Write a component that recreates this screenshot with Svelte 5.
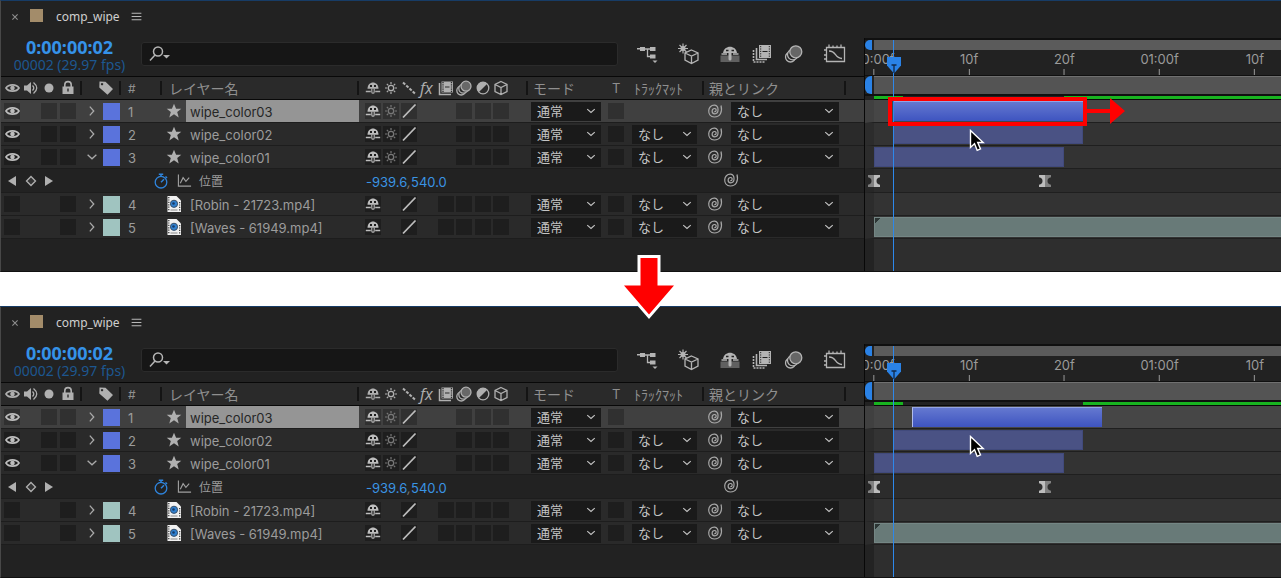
<script>
  // frames visible in the timeline
  const span = 42.75;
  const pct = (frame) => (frame / span) * 100;

  const ticks = [
    { frame: 0, text: '00:00f' },
    { frame: 10, text: '10f' },
    { frame: 20, text: '20f' },
    { frame: 30, text: '01:00f' },
    { frame: 40, text: '10f' },
  ];

  const layers = (start) => [
    { id: 1, name: 'wipe_color03', shape: true, selected: true, bar: [start, start + 20] },
    { id: 2, name: 'wipe_color02', shape: true, matte: true, bar: [2, 22] },
    { id: 3, name: 'wipe_color01', shape: true, matte: true, open: true, bar: [0, 20] },
    { id: 4, name: '[Robin - 21723.mp4]', matte: true },
    { id: 5, name: '[Waves - 61949.mp4]', matte: true, bar: [0, 43] },
  ];

  const comps = [
    { id: 'before', layers: layers(2), cached: [[0, 3], [20, 43]], callout: true },
    { id: 'after', layers: layers(4), cached: [[0, 3], [22, 43]], callout: false },
  ];

  const keyframes = [0, 18];
  const playhead = 2;
</script>

{#snippet icon(name, size = 16)}
  <svg class="icon" width={size} height={size} viewBox="0 0 16 16" fill="none" stroke="currentColor" stroke-width="1.3" aria-hidden="true">
    {#if name === 'eye'}
      <path d="M2 8C4.500 3.800 12.500 3.800 15 8 12.500 12.200 4.500 12.200 2 8Z" stroke-width="1.700" />
      <circle cx="8.500" cy="8" r="2.300" fill="currentColor" stroke="none" />
    {:else if name === 'speaker'}
      <path d="M1 5.500h3L8 2v12l-4-3.500H1z" fill="currentColor" stroke="none" />
      <path d="M9.500 5.500q2.500 2.500 0 5M10.500 2.500q6.500 5.500 0 11" />
    {:else if name === 'dot'}
      <circle cx="8" cy="8" r="4.500" fill="currentColor" stroke="none" />
    {:else if name === 'lock'}
      <path d="M4.800 7V4.800a3.200 3.200 0 0 1 6.400 0V7" stroke-width="1.600" />
      <path d="M2.500 6.500h11V14h-11zM7.300 8.500v3h1.400v-3z" fill="currentColor" fill-rule="evenodd" stroke="none" />
    {:else if name === 'tag'}
      <path d="M1.500 1.500l6 .3 7.500 7.200-5.500 5.800L1.300 7.500zM4 2.900a1.200 1.200 0 1 0 .1 0z" fill="currentColor" fill-rule="evenodd" stroke="none" />
    {:else if name === 'shy'}
      <path d="M2.500 8.800C2.500 .3 13.500 .3 13.500 8.800z" fill="currentColor" stroke="none" />
      <path d="M5 6h2M9 6h2" stroke="#1e1e1e" stroke-width="1.900" />
      <path d="M6.800 8.500V12q0 1.300 1.200 1.300T9.200 12V8.500" stroke-width="1.100" />
      <path d="M.8 11.500h5M10.200 11.500h5" stroke-width="1.500" />
    {:else if name === 'sun'}
      <circle cx="8" cy="8" r="2.700" />
      <path d="M8 2v2.200M8 11.800V14M2 8h2.200M11.800 8H14M3.800 3.800l1.500 1.500M10.700 10.700l1.500 1.500M12.200 3.800l-1.500 1.500M5.300 10.700l-1.500 1.500" stroke-width="1.200" />
    {:else if name === 'quality'}
      <path d="M2 2.500l12.500 11.500" stroke-width="2" stroke-dasharray="3 1.400" />
    {:else if name === 'slash'}
      <path d="M2 14.500L14.500 1.500" stroke-width="1.800" />
    {:else if name === 'film'}
      <path d="M1.500 3v11.500H13" stroke-width="1.500" />
      <path d="M3.500 1.500H15v11H3.500z" fill="currentColor" stroke="none" />
      <path d="M5 2v10M13.500 2v10" stroke="#2a2a2a" stroke-dasharray="1.200 1" />
      <path d="M7 7h4.500" stroke="#2a2a2a" stroke-width="1" />
    {:else if name === 'blur'}
      <circle cx="5.200" cy="10.600" r="4.400" />
      <circle cx="7.400" cy="8.600" r="4.600" fill="#2a2a2a" />
      <circle cx="10" cy="6.200" r="5" fill="#686868" />
    {:else if name === 'adjust'}
      <circle cx="8" cy="8" r="5.800" />
      <path d="M3.700 12.300A6 6 0 1 1 12.300 3.700z" fill="currentColor" stroke="none" />
    {:else if name === 'cube'}
      <path d="M8 1.500l6 3v7l-6 3-6-3v-7zM2 4.500l6 3 6-3M8 7.500v7" />
    {:else if name === 'star'}
      <path d="M8 .8l2.100 5h5.200l-4.100 3.300 1.500 5.300L8 11.300l-4.700 3.100 1.500-5.300L.7 5.800h5.200z" fill="currentColor" stroke="none" />
    {:else if name === 'movie'}
      <path d="M1.500 0h9L15 4.500V16H1.500z" fill="#f1f1f1" stroke="none" />
      <path d="M2.800 1v14M13.700 6v9" stroke="#333" stroke-width="1.200" stroke-dasharray="1.200 1.200" />
      <circle cx="8" cy="7.800" r="3.600" fill="#2f80d0" stroke="#3a5068" stroke-width="1" />
      <circle cx="7.500" cy="7.500" r="1.300" fill="#173a68" stroke="none" />
      <path d="M4.500 14h7" stroke="#888" stroke-width="1" />
    {:else if name === 'spiral'}
      <path d="M7.300 8.600C9.300 8.900 10 5.800 7.700 5.500 4.500 5.300 4 10.700 7.700 10.900 12 10.900 12.300 3 7.700 2.200 .3 1.700-.7 13.300 7.300 14 13.500 14 15.500 8.500 14 2.500" stroke-width="1.200" />
    {:else if name === 'right'}
      <path d="M5.500 3l4.500 5-4.500 5" stroke-width="1.500" />
    {:else if name === 'down'}
      <path d="M3 5.500l5 4.500 5-4.500" stroke-width="1.500" />
    {:else if name === 'prev'}
      <path d="M12 3v10L4 8z" fill="currentColor" stroke="none" />
    {:else if name === 'next'}
      <path d="M4 3v10l8-5z" fill="currentColor" stroke="none" />
    {:else if name === 'key'}
      <path d="M8 3.500L12.500 8 8 12.500 3.500 8z" fill="#333" />
    {:else if name === 'stopwatch'}
      <circle cx="8" cy="9.200" r="5.800" />
      <path d="M8 9.200l3-3M5.800 1.200h4.400M8 1.200v2.200M12.500 3.500l1.500 1.500" stroke-width="1.500" />
    {:else if name === 'graph'}
      <path d="M1.500 1.500V14H15M3.500 11l3-6 3 4 3.500-4" stroke-width="1.200" />
    {:else if name === 'close'}
      <path d="M4.500 4.500l7 7M11.500 4.500l-7 7" stroke-width="1.400" />
    {:else if name === 'menu'}
      <path d="M2 4h12M2 8h12M2 12h12" stroke-width="1.400" />
    {/if}
  </svg>
{/snippet}

{#snippet toolIcon(name)}
  <svg class="icon" width="24" height="22" viewBox="0 0 24 22" fill="none" stroke="currentColor" stroke-width="1.3" aria-hidden="true">
    {#if name === 'flow'}
      <path d="M1 5h3V4h5v4H4V6.500H1zM14 4h5.500v4H14zM14 11.500h5.500v4H14z" fill="currentColor" stroke="none" />
      <path d="M9 6h6M11.500 6v7.500h3" />
      <path d="M16.500 17.500h5L19 20z" fill="currentColor" stroke="none" />
    {:else if name === 'draft'}
      <path d="M6 .5v10M1 5.500h10M2.500 2l7 7M9.500 2l-7 7" stroke-width="1.200" />
      <circle cx="6" cy="5.500" r="2.500" fill="currentColor" stroke="none" />
      <path d="M14.500 7l6.500 3v7l-6.500 3.500L8 17v-7zM8 10l6.500 3L21 10M14.500 13v7.500" />
    {:else if name === 'shy'}
      <path d="M2.500 12.500h19V19h-19z" fill="#606060" stroke="none" />
      <path d="M5 10C6 1.500 18 1.500 19 10z" fill="currentColor" stroke="none" />
      <path d="M8 7.500h2.500M13.500 7.500H16" stroke="#222" stroke-width="1.500" />
      <path d="M12 9v7" stroke-width="3" stroke-linecap="round" />
      <path d="M3.500 11h5.500M15 11h5.500" stroke-width="1.600" />
    {:else if name === 'blend'}
      <path d="M3.500 7v12H15" stroke-width="1.600" stroke-dasharray="2 1" />
      <path d="M6.500 5v11.500H17" stroke-width="1.600" />
      <path d="M9 2h12v13H9z" fill="currentColor" stroke="none" />
      <path d="M10.700 3v11M19.300 3v11" stroke="#222" stroke-width="1" stroke-dasharray="1.200 1.200" />
      <path d="M12.500 8.500h5" stroke="#222" stroke-width="1" />
    {:else if name === 'blur'}
      <circle cx="8.500" cy="14" r="5" />
      <circle cx="10.800" cy="11.600" r="5.300" fill="#222" />
      <circle cx="13.800" cy="8.800" r="6" fill="#666" />
    {:else}
      <path d="M3.500 4.500h18v14h-18zM6 1.500v3M10 2.500v2M14 2.500v2M18 1.500v3M1 7h2.500M1 12h2.500M1 16h2.500M6 8c8 0 5 7 13 7.500" />
    {/if}
  </svg>
{/snippet}

{#snippet cell(name, label, dim = false)}
  <button class="cell" class:dim aria-label={label}>
    {#if name}{@render icon(name)}{/if}
  </button>
{/snippet}

{#snippet dropdown(label, value)}
  <label class="dropdown">
    <select aria-label={label}>
      <option>{value}</option>
    </select>
    {@render icon('down', 12)}
  </label>
{/snippet}

{#snippet layerRow(layer)}
  <div class="row layer" class:selected={layer.selected}>
    <div class="av">
      {@render cell(layer.shape ? 'eye' : '', 'Video')}
      <span></span>
      {#if layer.shape}
        {@render cell('', 'Solo')}
      {:else}
        <span></span>
      {/if}
      {@render cell('', 'Lock')}
    </div>
    <div class="label">
      <button class="twirl" aria-label="Expand">{@render icon(layer.open ? 'down' : 'right', 14)}</button>
      <button class="swatch" class:footage={!layer.shape} aria-label="Label color"></button>
    </div>
    <div class="num">{layer.id}</div>
    <div class="name">
      <span class="kind">{@render icon(layer.shape ? 'star' : 'movie')}</span>
      <span class="text">{layer.name}</span>
    </div>
    <div class="switches">
      {@render cell('shy', 'Shy')}
      {#if layer.shape}
        {@render cell('sun', 'Collapse', true)}
      {:else}
        <span></span>
      {/if}
      {@render cell('slash', 'Quality')}
      <span></span>
      {#if layer.shape}
        <span></span>
      {:else}
        {@render cell('', 'Frame blending')}
      {/if}
      {@render cell('', 'Motion blur')}
      {@render cell('', 'Adjustment')}
      {@render cell('', '3D')}
    </div>
    <div class="mode">{@render dropdown('Mode', '通常')}</div>
    <div class="preserve">{@render cell('', 'T')}</div>
    <div class="matte">
      {#if layer.matte}{@render dropdown('Track matte', 'なし')}{/if}
    </div>
    <div class="parent">
      <button class="whip" aria-label="Pick whip">{@render icon('spiral')}</button>
      {@render dropdown('Parent', 'なし')}
    </div>
  </div>
{/snippet}

{#snippet comp(data)}
  <section class="comp">
    <header class="tabs">
      <button class="close" aria-label="Close">{@render icon('close', 12)}</button>
      <span class="tab-color"></span>
      <span class="tab-name">comp_wipe</span>
      <button aria-label="Panel menu">{@render icon('menu', 13)}</button>
    </header>

    <div class="columns">
      <div class="outline">
        <div class="toolbar">
          <div class="time">
            <strong>0:00:00:02</strong>
            <span>00002 (29.97 fps)</span>
          </div>
          <div class="search">
            <svg class="icon" width="22" height="16" viewBox="0 0 22 16" fill="none" stroke="#b5b5b5" stroke-width="1.5" aria-hidden="true">
              <circle cx="9" cy="5.500" r="4.500" />
              <path d="M6 9l-5 5.500" />
              <path d="M14 9h7l-3.500 3.500z" fill="#b5b5b5" stroke="none" />
            </svg>
            <input type="text" aria-label="Search" />
          </div>
          <div class="tools">
            <button aria-label="Flowchart">{@render toolIcon('flow')}</button>
            <button aria-label="Draft 3D">{@render toolIcon('draft')}</button>
            <div class="tool-group">
              <button aria-label="Hide shy layers">{@render toolIcon('shy')}</button>
              <button aria-label="Frame blending">{@render toolIcon('blend')}</button>
              <button aria-label="Motion blur">{@render toolIcon('blur')}</button>
            </div>
            <button aria-label="Graph editor">{@render toolIcon('graph')}</button>
          </div>
        </div>

        <div class="row head">
          <div class="av">
            {@render icon('eye')}
            {@render icon('speaker')}
            {@render icon('dot')}
            {@render icon('lock')}
          </div>
          <div class="label">{@render icon('tag')}</div>
          <div class="num">#</div>
          <div class="name">レイヤー名</div>
          <div class="switches">
            {@render icon('shy')}
            {@render icon('sun')}
            {@render icon('quality')}
            <span class="fx">fx</span>
            {@render icon('film')}
            {@render icon('blur')}
            {@render icon('adjust')}
            {@render icon('cube')}
          </div>
          <div class="mode">モード</div>
          <div class="preserve">T</div>
          <div class="matte">ﾄﾗｯｸﾏｯﾄ</div>
          <div class="parent">親とリンク</div>
        </div>

        {#each data.layers as layer}
          {@render layerRow(layer)}
          {#if layer.open}
            <div class="row property">
              <div class="av">
                <button aria-label="Previous keyframe">{@render icon('prev')}</button>
                <button aria-label="Keyframe">{@render icon('key')}</button>
                <button aria-label="Next keyframe">{@render icon('next')}</button>
              </div>
              <div class="prop-name">
                <button class="stopwatch" aria-label="Stopwatch">{@render icon('stopwatch')}</button>
                <button aria-label="Graph">{@render icon('graph', 15)}</button>
                <span>位置</span>
              </div>
              <div class="value">-939.6<i>,</i>540.0</div>
              <button class="whip" aria-label="Pick whip">{@render icon('spiral')}</button>
            </div>
          {/if}
        {/each}
        <div class="rest"></div>
      </div>

      <div class="timeline">
        <div class="navigator"><i class="handle"></i><i class="range"></i></div>
        <div class="ruler">
          <div class="scale">
            {#each ticks as tick}
              <span class="tick" style="left: {pct(tick.frame)}%">{tick.text}</span>
            {/each}
          </div>
        </div>
        <div class="work"><i class="handle"></i><i class="range"></i></div>
        <div class="cache">
          {#each data.cached as [from, to]}
            <i style="left: {pct(from)}%; width: {pct(to - from)}%"></i>
          {/each}
        </div>

        {#each data.layers as layer}
          <div class="lane" class:selected={layer.selected}>
            {#if layer.bar}
              <div
                class="bar"
                class:selected={layer.selected}
                class:footage={!layer.shape}
                class:moved={layer.bar[0] > playhead}
                style="left: {pct(layer.bar[0])}%; width: {pct(layer.bar[1] - layer.bar[0])}%"
              ></div>
            {/if}
          </div>
          {#if layer.open}
            <div class="lane property">
              {#each keyframes as frame}
                <svg class="keyframe" style="left: {pct(frame)}%" width="12" height="12" viewBox="0 0 12 12" aria-hidden="true">
                  <path d="M0 0h6v12H0V9.800q3.500-.5 3.500-3.800T0 2.200z" fill={frame ? '#bdbdbd' : '#808080'} />
                  <path d="M6 0h6v2.200Q8.500 2.700 8.500 6t3.500 3.800V12H6z" fill={frame ? '#808080' : '#bdbdbd'} />
                </svg>
              {/each}
            </div>
          {/if}
        {/each}
        <div class="lane rest"></div>

        <div class="overlay">
          <div class="playhead" style="left: {pct(playhead)}%">
            <svg width="14" height="18" viewBox="0 0 14 18" aria-hidden="true">
              <path d="M0 1h14v8.500L7 17.500 0 9.500z" fill="#2a82e6" />
              <path d="M4.500 9h5M7 9v8" stroke="#10294a" stroke-width="1.300" />
            </svg>
          </div>
          {#if data.callout}
            <div class="callout" style="left: {pct(2)}%; width: {pct(20)}%">
              <svg width="42" height="26" viewBox="0 0 42 26" aria-hidden="true">
                <path d="M0 11h27V0l15 13-15 13V15H0z" fill="#f00" />
              </svg>
            </div>
          {/if}
          <svg class="cursor" style="left: {pct(10)}%" width="16" height="23" viewBox="0 0 16 23" aria-hidden="true">
            <path d="M1.500 1.500v17l4-3.700 2.700 6.500 3.300-1.400-2.800-6.400h5.500z" fill="#000" stroke="#fff" stroke-width="1.400" />
          </svg>
        </div>
      </div>
    </div>
  </section>
{/snippet}

<main>
  {@render comp(comps[0])}
  <div class="between">
    <svg width="57" height="66" viewBox="0 0 57 66" aria-hidden="true">
      <path d="M20 4h17v27.500h16.500l-25 29-25-29H20z" fill="#f00" stroke="#fff" stroke-width="6" paint-order="stroke" />
    </svg>
  </div>
  {@render comp(comps[1])}
</main>

<style>
  :global(body) {
    margin: 0;
    background: #fff;
  }

  main {
    font-family: Inter, "Noto Sans CJK JP", sans-serif;
    font-size: 13px;
    color: #9c9c9c;
  }

  button {
    display: flex;
    align-items: center;
    justify-content: center;
    padding: 0;
    border: none;
    background: none;
    color: inherit;
  }

  .icon {
    display: block;
    flex: none;
  }

  .comp {
    border-top: 1px solid #173c66;
    border-bottom: 1px solid #111;
    border-left: 1px solid #484848;
    background: #222;
    overflow: hidden;
  }

  .tabs {
    display: flex;
    align-items: center;
    height: 31px;
    padding: 0 0 6px 8px;
    color: #b8b8b8;
  }

  .close {
    color: #909090;
  }

  .tab-color {
    width: 13px;
    height: 13px;
    margin: 0 13px 2px 9px;
    background: #a38c6a;
  }

  .tab-name {
    margin-right: 10px;
    font: 12px "Noto Sans", sans-serif;
    color: #cfcfcf;
  }

  .columns {
    display: grid;
    grid-template-columns: minmax(0, 863fr) minmax(0, 417fr);
  }

  .outline {
    display: flex;
    flex-direction: column;
  }

  .toolbar {
    display: flex;
    height: 38px;
  }

  .time {
    display: flex;
    flex-direction: column;
    align-items: center;
    width: 137px;
    margin-right: 3px;
    font-family: "Noto Sans", sans-serif;
  }

  .time strong {
    font-size: 18px;
    line-height: 19px;
    color: #3592e8;
  }

  .time span {
    font-size: 14px;
    line-height: 16px;
    color: #1d5790;
  }

  .search {
    display: flex;
    flex: 1;
    align-items: center;
    height: 22px;
    margin-top: 4px;
    padding-left: 7px;
    border: 1px solid #2b2b2b;
    border-radius: 3px;
    background: #161616;
  }

  .search input {
    flex: 1;
    min-width: 0;
    border: none;
    background: none;
    color: #ccc;
  }

  .tools {
    display: flex;
    align-items: center;
    gap: 17px;
    height: 32px;
    margin: 0 17px 0 18px;
    color: #b4b4b4;
  }

  .tool-group {
    display: flex;
    gap: 8px;
  }

  .row {
    display: grid;
    grid-template-columns: 81px 39px 41px minmax(0, 1fr) 169px 76px 25px 75px 142px 18px;
    box-sizing: border-box;
    height: 23px;
    border-bottom: 1px solid #1d1d1d;
    background: #2a2a2a;
  }

  .row > div {
    display: flex;
    align-items: center;
  }

  .row .av {
    display: grid;
    grid-template-columns: 19px 18px 19px 16px;
    padding-left: 3px;
  }

  .row .switches {
    display: grid;
    grid-template-columns: 18px 18px 19px 18px 18px 19px 18px 16px 1fr;
    padding-left: 6px;
  }

  .head {
    height: 24px;
    border-top: 1px solid #080808;
    border-bottom-color: #080808;
    font-size: 14px;
    color: #8f8f8f;
  }

  .head .icon {
    color: #b0b0b0;
  }

  .head > .av,
  .head > .label,
  .head > .num,
  .head > .name,
  .head > .switches,
  .head > .matte,
  .head > .parent {
    background: linear-gradient(#141414, #141414) right center / 2px 14px no-repeat;
  }

  .head .label {
    padding-left: 16px;
  }

  .head .num {
    font-size: 12px;
  }

  .head .name {
    padding-left: 7px;
  }

  .head .mode {
    padding-left: 5px;
  }

  .head .preserve {
    padding-left: 8px;
    font-size: 13px;
  }

  .head .matte,
  .head .parent {
    padding-left: 5px;
  }

  .fx {
    font: italic 16px/20px "Open Sans", sans-serif;
    color: #b0b0b0;
  }

  .layer.selected {
    background: #404040;
  }

  .cell {
    width: 16px;
    height: 16px;
    background: #1e1e1e;
    color: #bdbdbd;
  }

  .selected .cell {
    background: #303030;
  }

  .cell.dim {
    color: #777;
  }

  .twirl {
    width: 14px;
    margin: 0 4px 0 3px;
    color: #aaa;
  }

  .swatch {
    width: 17px;
    height: 17px;
    background: #5a73dc;
  }

  .swatch.footage {
    background: #a0c4c0;
  }

  .num {
    padding-left: 7px;
  }

  .layer .num {
    padding-top: 2px;
  }

  .name .kind {
    margin: 0 4px;
    color: #b0b0b0;
  }

  .name .text {
    flex: 1;
    padding-top: 2px;
    padding-left: 4px;
    line-height: 20px;
  }

  .selected .name .text {
    background: #959595;
    color: #262626;
  }

  .mode,
  .matte {
    padding-left: 3px;
  }

  .preserve {
    padding-left: 4px;
  }

  .dropdown {
    display: flex;
    align-items: center;
    width: 70px;
    height: 19px;
    padding-right: 4px;
    box-sizing: border-box;
    background: #1a1a1a;
    color: #c4c4c4;
  }

  .dropdown select {
    flex: 1;
    min-width: 0;
    padding: 0 0 0 6px;
    border: none;
    background: none;
    appearance: none;
    color: inherit;
    font: 13px/18px "Noto Sans CJK JP", sans-serif;
  }

  .matte .dropdown {
    width: 65px;
  }

  .parent .dropdown {
    width: 108px;
  }

  .whip {
    margin: 0 8px 0 3px;
    color: #a8a8a8;
  }

  .property {
    grid-template-columns: 151px minmax(0, 1fr) 357px 141px;
    height: 24px;
    background: #222;
  }

  .row.property .av {
    justify-items: start;
    padding-left: 3px;
    color: #b0b0b0;
  }

  .prop-name {
    gap: 7px;
    font-size: 12px;
  }

  .prop-name button {
    color: #a0a0a0;
  }

  .prop-name .stopwatch {
    width: 18px;
    color: #2f84dc;
  }

  .value {
    padding-top: 2px;
    font-size: 13px;
    color: #3a94e4;
  }

  .value i {
    color: #777;
  }

  .property .whip {
    justify-content: flex-start;
    margin-left: 0;
    padding-bottom: 2px;
  }

  .rest {
    height: 32px;
  }

  .timeline {
    position: relative;
    border-left: 1px solid #080808;
    overflow: hidden;
  }

  .navigator,
  .work {
    display: flex;
    gap: 2px;
    height: 10px;
    border-top: 2px solid #101010;
  }

  .work {
    height: 18px;
    border-top-width: 1px;
    border-bottom: 2px solid #101010;
  }

  .handle {
    width: 7px;
    border-radius: 6px 0 0 6px;
    background: #2a82e6;
  }

  .range {
    flex: 1;
    background: #5b5b5b;
  }

  .work .range {
    background: #545454;
    border-top: 1px solid #707070;
  }

  .ruler {
    height: 25px;
    padding-left: 9px;
    font-size: 13px;
    line-height: 19px;
    color: #9a9a9a;
  }

  .scale,
  .cache,
  .lane {
    position: relative;
  }

  .tick {
    position: absolute;
    display: flex;
    flex-direction: column;
    align-items: center;
    transform: translateX(-50%);
  }

  .tick::after {
    content: '';
    width: 1px;
    height: 6px;
    background: #999;
  }

  .cache {
    height: 3px;
    margin-left: 9px;
    border-bottom: 1px solid #080808;
  }

  .cache i {
    position: absolute;
    height: 3px;
    background: #18b420;
  }

  .lane {
    box-sizing: border-box;
    height: 23px;
    border-bottom: 1px solid #1f1f1f;
    border-left: 9px solid #2c2c2c;
    background: #333;
  }

  .lane.selected {
    border-left-color: #404040;
    background: #464646;
  }

  .lane.property {
    height: 24px;
    background: #2c2c2c;
    border-left-color: #272727;
  }

  .lane.rest {
    height: 32px;
    border-bottom: none;
    border-left-color: #232323;
    background: #2e2e2e;
  }

  .bar {
    position: absolute;
    top: 1px;
    box-sizing: border-box;
    height: 20px;
    border: 1px solid #414a7c;
    background: #4a5284;
  }

  .bar.selected {
    border: none;
    border-top: 1px solid #94a4e4;
    background: linear-gradient(#6478d0, #3e54c0);
  }

  .bar.moved {
    border-left: 1px solid #b0bcec;
  }

  .bar.footage {
    border-color: #748684;
    background: linear-gradient(135deg, #2c3635 4px, #687a78 4px);
  }

  .keyframe {
    position: absolute;
    top: 6px;
    margin-left: -6px;
  }

  .overlay {
    position: absolute;
    inset: 0 0 0 9px;
    pointer-events: none;
  }

  .playhead {
    position: absolute;
    top: 2px;
    bottom: 0;
    border-left: 1px solid #2d88ec;
  }

  .playhead svg {
    position: absolute;
    top: 16px;
    left: -7px;
  }

  .callout {
    position: absolute;
    top: 59px;
    height: 21px;
    margin-left: -5px;
    padding-right: 1px;
    border: 4px solid #f00;
  }

  .callout svg {
    position: absolute;
    top: -3px;
    left: 100%;
  }

  .cursor {
    position: absolute;
    top: 91px;
  }

  .between {
    position: relative;
    height: 34px;
  }

  .between svg {
    position: absolute;
    z-index: 1;
    top: -18px;
    left: calc(50% + 8px);
    transform: translateX(-50%);
  }
</style>
